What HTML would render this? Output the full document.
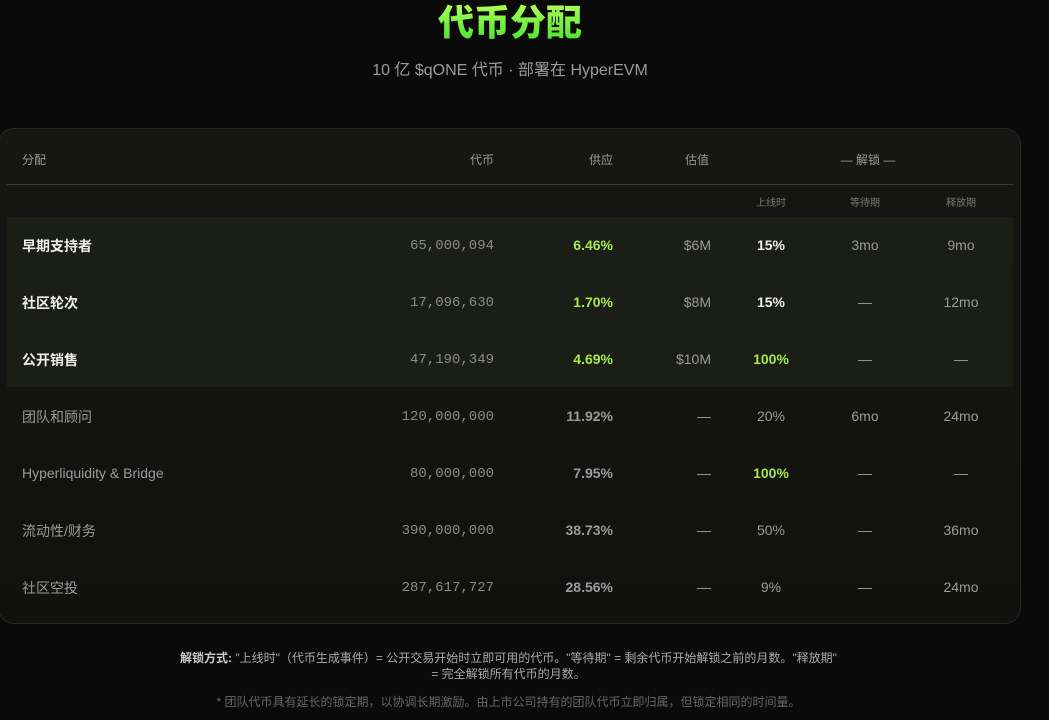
<!DOCTYPE html>
<html><head><meta charset="utf-8"><style>
*{margin:0;padding:0;box-sizing:border-box}
body{width:1049px;height:720px;background:#0a0a0a;font-family:"Liberation Sans","Noto Sans CJK SC",sans-serif;color:#9a9a9a;position:relative;overflow:hidden}
.t{position:absolute;white-space:nowrap}
h1{position:absolute;left:0;width:1020px;top:1px;text-align:center;font-size:36px;font-weight:900;line-height:44px;color:#6dff3a;background:linear-gradient(180deg,#b6ff5a,#3fe22a);-webkit-background-clip:text;background-clip:text;-webkit-text-fill-color:transparent}
.sub{left:0;width:1020px;top:56px;text-align:center;font-size:16px;color:#9a9a9a}
.card{position:absolute;left:-2px;top:128px;width:1023px;height:496px;border:1px solid #262622;border-radius:16px;background:linear-gradient(180deg,#161614,#111110)}
.hl{position:absolute;left:7px;top:217px;width:1006px;height:170px;background:#1b1d17}
.div{position:absolute;left:7px;top:184px;width:1006px;height:1px;background:#3c3a2c}
.r{text-align:right}.c{text-align:center}
.num{font-family:"Liberation Mono",monospace;font-size:14px;color:#8a8a8a;margin-top:2px}
.row{font-size:14px}
.g{color:#a6e84a;font-weight:bold}
.w{color:#eee;font-weight:bold}
.fn{font-size:12px;left:0;width:1049px;text-align:center}
</style></head><body>
<h1>代币分配</h1>
<div class="t sub">10 亿 $qONE 代币 · 部署在 HyperEVM</div>
<div class="card"></div>
<div class="hl"></div>
<div class="div"></div>
<div class="t" style="left:22px;top:151px;font-size:12px">分配</div>
<div class="t r" style="left:394px;width:100px;top:151px;font-size:12px">代币</div>
<div class="t r" style="left:513px;width:100px;top:151px;font-size:12px">供应</div>
<div class="t" style="left:685px;top:151px;font-size:12px">估值</div>
<div class="t c" style="left:818px;width:100px;top:151px;font-size:12px">— 解锁 —</div>
<div class="t c" style="left:731px;width:80px;top:194px;font-size:10px;color:#777">上线时</div>
<div class="t c" style="left:825px;width:80px;top:194px;font-size:10px;color:#777">等待期</div>
<div class="t c" style="left:921px;width:80px;top:194px;font-size:10px;color:#777">释放期</div>

<div class="t row w" style="left:22px;top:236px">早期支持者</div>
<div class="t num r" style="left:334px;width:160px;top:236px">65,000,094</div>
<div class="t row g r" style="left:513px;width:100px;top:237px">6.46%</div>
<div class="t row r" style="left:611px;width:100px;top:237px">$6M</div>
<div class="t row w c" style="left:731px;width:80px;top:237px">15%</div>
<div class="t row c" style="left:825px;width:80px;top:237px">3mo</div>
<div class="t row c" style="left:921px;width:80px;top:237px">9mo</div>

<div class="t row w" style="left:22px;top:293px">社区轮次</div>
<div class="t num r" style="left:334px;width:160px;top:293px">17,096,630</div>
<div class="t row g r" style="left:513px;width:100px;top:294px">1.70%</div>
<div class="t row r" style="left:611px;width:100px;top:294px">$8M</div>
<div class="t row w c" style="left:731px;width:80px;top:294px">15%</div>
<div class="t row c" style="left:825px;width:80px;top:294px">—</div>
<div class="t row c" style="left:921px;width:80px;top:294px">12mo</div>

<div class="t row w" style="left:22px;top:350px">公开销售</div>
<div class="t num r" style="left:334px;width:160px;top:350px">47,190,349</div>
<div class="t row g r" style="left:513px;width:100px;top:351px">4.69%</div>
<div class="t row r" style="left:611px;width:100px;top:351px">$10M</div>
<div class="t row g c" style="left:731px;width:80px;top:351px">100%</div>
<div class="t row c" style="left:825px;width:80px;top:351px">—</div>
<div class="t row c" style="left:921px;width:80px;top:351px">—</div>

<div class="t row" style="left:22px;top:407px">团队和顾问</div>
<div class="t num r" style="left:334px;width:160px;top:407px">120,000,000</div>
<div class="t row r" style="left:513px;width:100px;top:408px;font-weight:bold">11.92%</div>
<div class="t row r" style="left:611px;width:100px;top:408px">—</div>
<div class="t row c" style="left:731px;width:80px;top:408px">20%</div>
<div class="t row c" style="left:825px;width:80px;top:408px">6mo</div>
<div class="t row c" style="left:921px;width:80px;top:408px">24mo</div>

<div class="t row" style="left:22px;top:465px">Hyperliquidity &amp; Bridge</div>
<div class="t num r" style="left:334px;width:160px;top:464px">80,000,000</div>
<div class="t row r" style="left:513px;width:100px;top:465px;font-weight:bold">7.95%</div>
<div class="t row r" style="left:611px;width:100px;top:465px">—</div>
<div class="t row g c" style="left:731px;width:80px;top:465px">100%</div>
<div class="t row c" style="left:825px;width:80px;top:465px">—</div>
<div class="t row c" style="left:921px;width:80px;top:465px">—</div>

<div class="t row" style="left:22px;top:521px">流动性/财务</div>
<div class="t num r" style="left:334px;width:160px;top:521px">390,000,000</div>
<div class="t row r" style="left:513px;width:100px;top:522px;font-weight:bold">38.73%</div>
<div class="t row r" style="left:611px;width:100px;top:522px">—</div>
<div class="t row c" style="left:731px;width:80px;top:522px">50%</div>
<div class="t row c" style="left:825px;width:80px;top:522px">—</div>
<div class="t row c" style="left:921px;width:80px;top:522px">36mo</div>

<div class="t row" style="left:22px;top:578px">社区空投</div>
<div class="t num r" style="left:334px;width:160px;top:578px">287,617,727</div>
<div class="t row r" style="left:513px;width:100px;top:579px;font-weight:bold">28.56%</div>
<div class="t row r" style="left:611px;width:100px;top:579px">—</div>
<div class="t row c" style="left:731px;width:80px;top:579px">9%</div>
<div class="t row c" style="left:825px;width:80px;top:579px">—</div>
<div class="t row c" style="left:921px;width:80px;top:579px">24mo</div>

<div class="t fn" style="left:0;width:1017px;top:649px;color:#aaa"><b style="color:#ccc">解锁方式:</b> "上线时"（代币生成事件）= 公开交易开始时立即可用的代币。"等待期" = 剩余代币开始解锁之前的月数。"释放期"</div>
<div class="t fn" style="left:0;width:1017px;top:665px;color:#aaa">= 完全解锁所有代币的月数。</div>
<div class="t fn" style="left:0;width:1017px;top:693px;color:#666">* 团队代币具有延长的锁定期，以协调长期激励。由上市公司持有的团队代币立即归属，但锁定相同的时间量。</div>
</body></html>
